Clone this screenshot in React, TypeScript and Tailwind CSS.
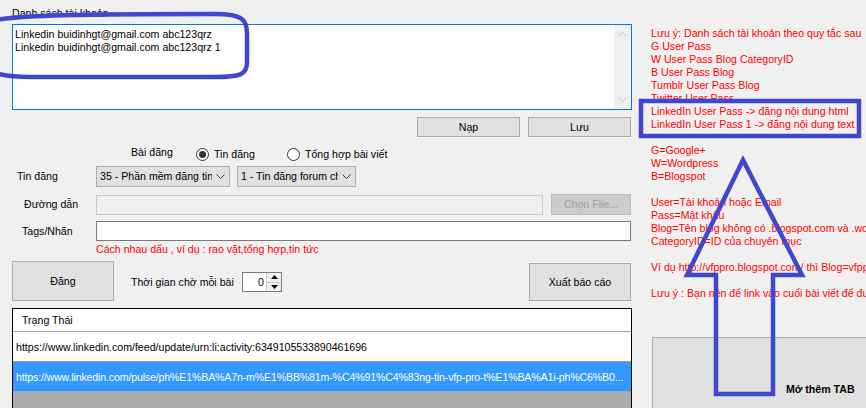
import React from "react";

const notes = [
  "Lưu ý: Danh sách tài khoản theo quy tắc sau",
  "G User Pass",
  "W User Pass Blog CategoryID",
  "B User Pass Blog",
  "Tumblr User Pass Blog",
  "Twitter User Pass",
  "LinkedIn User Pass -> đăng nội dung html",
  "LinkedIn User Pass 1 -> đăng nội dung text",
  "",
  "G=Google+",
  "W=Wordpress",
  "B=Blogspot",
  "",
  "User=Tài khoản hoặc Email",
  "Pass=Mật khẩu",
  "Blog=Tên blog không có .blogspot.com và .wordpress.com",
  "CategoryID=ID của chuyên mục",
  "",
  "Ví dụ http://vfppro.blogspot.com/ thì Blog=vfppro",
  "",
  "Lưu ý : Bạn nên để link vào cuối bài viết để được index nhanh",
];

function Chevron({ color = "#404040", up = false }: { color?: string; up?: boolean }) {
  return (
    <svg width="9" height="5" viewBox="0 0 9 5">
      <path
        d={up ? "M0.5 4.5 L4.5 0.5 L8.5 4.5" : "M0.5 0.5 L4.5 4.5 L8.5 0.5"}
        fill="none"
        stroke={color}
        strokeWidth="1"
      />
    </svg>
  );
}

function Combo({ text, w }: { text: string; w: string }) {
  return (
    <div className={`flex h-[21px] items-center border border-[#adadad] bg-[#e1e1e1] ${w}`}>
      <div className="flex-1 overflow-hidden whitespace-nowrap pl-[3px]">{text}</div>
      <div className="flex w-[17px] justify-center">
        <Chevron />
      </div>
    </div>
  );
}

function Radio({ checked, label }: { checked?: boolean; label: string }) {
  return (
    <div className="mt-[2px] flex items-start gap-[5px]">
      <div className="flex h-[13px] w-[13px] items-center justify-center rounded-full border border-[#333333] bg-white">
        {checked && <div className="h-[7px] w-[7px] rounded-full bg-[#333333]" />}
      </div>
      <span>{label}</span>
    </div>
  );
}

export default function App() {
  return (
    <div className="relative h-[408px] w-[866px] overflow-hidden bg-[#f0f0f0] font-['Liberation_Sans',Arial,sans-serif] text-[10.6px] leading-[13px] text-black">
      <div className="flex">
        {/* left side: form */}
        <div className="ml-[12px] w-[620px] shrink-0">
          <div className="pt-[7px]">Danh sách tài khoản</div>
          <div className="mt-[4px] flex h-[86px] border border-[#0078d7] bg-white">
            <div className="flex-1 pl-[2px] pt-[3px]">
              <div>Linkedin buidinhgt@gmail.com abc123qrz</div>
              <div>Linkedin buidinhgt@gmail.com abc123qrz 1</div>
            </div>
            <div className="flex w-[17px] flex-col items-center justify-between bg-[#f0f0f0] py-[7px]">
              <Chevron color="#c4c4c4" up />
              <Chevron color="#c4c4c4" />
            </div>
          </div>

          <div className="mt-[7px] flex justify-end gap-[8px] pr-[1px]">
            <button className="h-[20px] w-[103px] border border-[#adadad] bg-[#e1e1e1]">Nạp</button>
            <button className="h-[20px] w-[103px] border border-[#adadad] bg-[#e1e1e1]">Lưu</button>
          </div>

          <div className="mt-[9px] flex h-[16px] items-start pl-[119px]">
            <div className="w-[65px]">Bài đăng</div>
            <div className="w-[91px]">
              <Radio checked label="Tin đăng" />
            </div>
            <Radio label="Tổng hợp bài viết" />
          </div>

          <div className="mt-[4px] flex h-[21px] items-center">
            <div className="w-[84px] pl-[5px]">Tin đăng</div>
            <Combo text="35 - Phần mềm đăng tin" w="w-[134px]" />
            <div className="w-[7px]" />
            <Combo text="1 - Tin đăng forum chung" w="w-[119px]" />
          </div>

          <div className="mt-[7px] flex h-[21px] items-center">
            <div className="w-[84px] pl-[12px]">Đường dẫn</div>
            <div className="mt-[1px] h-[20px] w-[447px] border border-[#cccccc] bg-[#f0f0f0]" />
            <button className="ml-[8px] h-[21px] w-[80px] border border-[#bfbfbf] bg-[#cccccc] text-[#a0a0a0]">
              Chọn File...
            </button>
          </div>

          <div className="mt-[6px] flex h-[20px] items-center">
            <div className="w-[84px] pl-[10px]">Tags/Nhãn</div>
            <div className="h-[20px] w-[535px] border border-[#7a7a7a] bg-white" />
          </div>

          <div className="mt-[2px] pl-[84px] text-[#ff0000]">
            Cách nhau dấu , ví dụ : rao vặt,tổng hợp,tin tức
          </div>

          <div className="mt-[5px] flex h-[40px] items-end">
            <button className="h-[40px] w-[102px] border border-[#adadad] bg-[#e1e1e1]">Đăng</button>
            <div className="ml-[17px] flex items-center self-start pt-[11px]">
              <div className="w-[111px]">Thời gian chờ mỗi bài</div>
              <div className="flex h-[20px] w-[40px] border border-[#7a7a7a] bg-white">
                <div className="flex-1 pr-[2px] pt-[3px] text-right">0</div>
                <div className="flex w-[15px] flex-col border-l border-[#c8c8c8]">
                  <div className="flex flex-1 items-center justify-center border-b border-[#c8c8c8] bg-[#f0f0f0]">
                    <svg width="7" height="4" viewBox="0 0 7 4">
                      <path d="M0 4 L3.5 0 L7 4 Z" fill="#000" />
                    </svg>
                  </div>
                  <div className="flex flex-1 items-center justify-center bg-[#f0f0f0]">
                    <svg width="7" height="4" viewBox="0 0 7 4">
                      <path d="M0 0 L3.5 4 L7 0 Z" fill="#000" />
                    </svg>
                  </div>
                </div>
              </div>
            </div>
            <button className="ml-auto mr-[1px] h-[38px] w-[102px] border border-[#adadad] bg-[#e1e1e1]">
              Xuất báo cáo
            </button>
          </div>

          <div className="mt-[7px] h-[120px] border border-black bg-[#ababab]">
            <div className="h-[23px] border-b border-[#a0a0a0] bg-white pl-[9px] pt-[5px]">Trạng Thái</div>
            <div className="h-[30px] overflow-hidden whitespace-nowrap border-b border-[#a0a0a0] bg-white pl-[3px] pt-[9px]">
              https://www.linkedin.com/feed/update/urn:li:activity:6349105533890461696
            </div>
            <div className="h-[29px] overflow-hidden whitespace-nowrap bg-[#3399ff] pl-[3px] pt-[9px] tracking-[-0.15px] text-white">
              https://www.linkedin.com/pulse/ph%E1%BA%A7n-m%E1%BB%81m-%C4%91%C4%83ng-tin-vfp-pro-t%E1%BA%A1i-ph%C6%B0...
            </div>
          </div>
        </div>

        {/* right side: notes */}
        <div className="ml-[19px] w-[215px] shrink-0 whitespace-nowrap">
          <div className="pt-[27px] text-[#ff0000]">
            {notes.map((n, i) => (
              <div key={i} className="h-[13px]">
                {n}
              </div>
            ))}
          </div>
          <div className="ml-[1px] mt-[37px] h-[100px] w-[400px] border border-[#adadad] bg-[#e1e1e1] pl-[133px] pt-[45px] font-bold">
            Mở thêm TAB
          </div>
        </div>
      </div>

      {/* hand-drawn annotations */}
      <svg className="pointer-events-none absolute inset-0" width="866" height="408" viewBox="0 0 866 408">
        <g fill="none" stroke="#3f48cc" strokeWidth="4.5" strokeLinejoin="miter">
          <path d="M-12 21 C 20 15, 80 14, 215 14 C 243 14, 247 20, 247 34 L 247 62 C 247 75, 240 77, 215 77 L 40 77 C 12 77, 0 76, -12 70" />
          <rect x="641" y="101" width="218" height="35" />
          <path d="M743 160 L802 275 L773 275 L773 394 L716 394 L716 275 L687 275 Z" />
        </g>
      </svg>
    </div>
  );
}
